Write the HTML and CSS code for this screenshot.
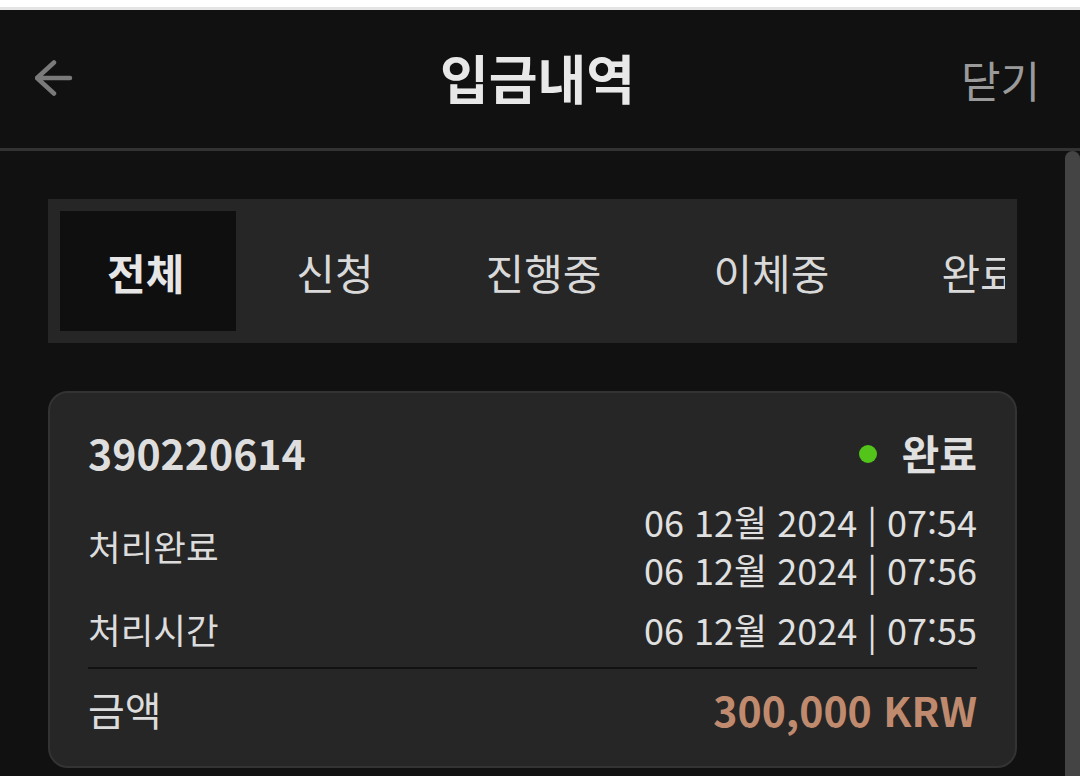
FILE: index.html
```html
<!DOCTYPE html>
<html lang="ko">
<head>
  <meta charset="UTF-8" />
  <title>입금내역</title>
  <link rel="stylesheet" href="styles.css">
</head>
<body>

  <div class="status-strip"></div>

  <header class="topbar">
    <button class="back" aria-label="뒤로">
      <svg width="40" height="40" viewBox="0 0 40 40">
        <path d="M35 19H2M19 3.5L2 19L19 34.5" fill="none" stroke="#7a7a7a" stroke-width="4.5" stroke-linecap="round" stroke-linejoin="round"/>
      </svg>
    </button>
    <h1 class="title">입금내역</h1>
    <a class="close">닫기</a>
  </header>

  <div class="body-wrap">
    <main class="content">

      <nav class="tabs">
        <div class="tab-track">
          <span class="tab active">전체</span>
          <span class="tab">신청</span>
          <span class="tab">진행중</span>
          <span class="tab">이체중</span>
          <span class="tab">완료</span>
        </div>
      </nav>

      <section class="card">
        <div class="card-head">
          <span class="deposit-id">390220614</span>
          <span class="status"><i class="dot"></i>완료</span>
        </div>

        <div class="row row-done">
          <span class="label">처리완료</span>
          <div class="values">
            <span>06 12월 2024 | 07:54</span>
            <span>06 12월 2024 | 07:56</span>
          </div>
        </div>

        <div class="row row-time">
          <span class="label">처리시간</span>
          <div class="values">
            <span>06 12월 2024 | 07:55</span>
          </div>
        </div>

        <div class="row row-amount">
          <span class="label">금액</span>
          <span class="amount">300,000 KRW</span>
        </div>
      </section>

    </main>
    <div class="scrollbar"><div class="thumb"></div></div>
  </div>

</body>
</html>
```

FILE: styles.css
```css
* {
  box-sizing: border-box;
}
html, body {
  margin: 0;
  height: 100%;
}
body {
  font-family: "Noto Sans CJK KR", "Noto Sans", sans-serif;
  background: #111;
  color: #dcdcdc;
  overflow: hidden;
  display: flex;
  flex-direction: column;
}
.status-strip {
  height: 10px;
  background: #fff;
  border-bottom: 3px solid #e4e4e4;
  flex: none;
}
.topbar {
  flex: none;
  height: 141px;
  display: grid;
  grid-template-columns: 1fr auto 1fr;
  align-items: center;
  padding: 0 40px 0 35px;
  border-bottom: 3px solid #333;
  background: #111;
}
.back {
  background: none;
  border: none;
  padding: 0;
  width: 40px;
  height: 40px;
  display: flex;
  cursor: pointer;
}
.title {
  margin: 0;
  font-size: 53px;
  font-weight: bold;
  color: #e8e8e8;
  line-height: 1;
  padding-bottom: 4px;
}
.close {
  justify-self: end;
  font-size: 43px;
  color: #9a9a9a;
  line-height: 1;
  cursor: pointer;
}

.body-wrap {
  flex: 1;
  display: flex;
  min-height: 0;
}
.content {
  flex: 1;
  padding: 48px 48px 0 48px;
}
.scrollbar {
  width: 15px;
  flex: none;
}
.thumb {
  height: 100%;
  background: #444;
  border-radius: 8px 8px 0 0;
}

.tabs {
  background: #262626;
  padding: 12px;
}
.tab-track {
  display: flex;
  gap: 13px;
  overflow: hidden;
}
.tab {
  flex: none;
  height: 120px;
  padding: 0 52px 0 47px;
  display: flex;
  align-items: center;
  font-size: 42px;
  color: #d9d9d9;
}
.tab.active {
  background: #0f0f0f;
  font-weight: bold;
  color: #e6e6e6;
}

.card {
  margin-top: 48px;
  background: #262626;
  border: 2px solid #333;
  border-radius: 20px;
  padding: 29px 38px 29px;
}
.card-head {
  height: 60px;
  display: flex;
  align-items: center;
  justify-content: space-between;
}
.deposit-id {
  font-size: 41px;
  font-weight: bold;
  color: #dedede;
}
.status {
  display: flex;
  align-items: center;
  font-size: 41px;
  font-weight: bold;
  color: #e0e0e0;
}
.dot {
  width: 18px;
  height: 18px;
  border-radius: 50%;
  background: #52c41a;
  margin-right: 25px;
  margin-top: 4px;
}
.row {
  display: flex;
  align-items: center;
  justify-content: space-between;
}
.label {
  font-size: 35.5px;
  color: #dcdcdc;
}
.values {
  display: flex;
  flex-direction: column;
  align-items: flex-end;
  font-size: 36px;
  line-height: 48px;
  color: #e0e0e0;
}
.row-done {
  margin-top: 15px;
}
.row-time {
  margin-top: 10px;
  padding-bottom: 13px;
  border-bottom: 2px solid #111;
}
.row-amount {
  height: 56px;
  margin-top: 12px;
}
.row-amount .label {
  font-size: 40px;
}
.amount {
  font-size: 41px;
  font-weight: bold;
  color: #c08a6e;
}
```
